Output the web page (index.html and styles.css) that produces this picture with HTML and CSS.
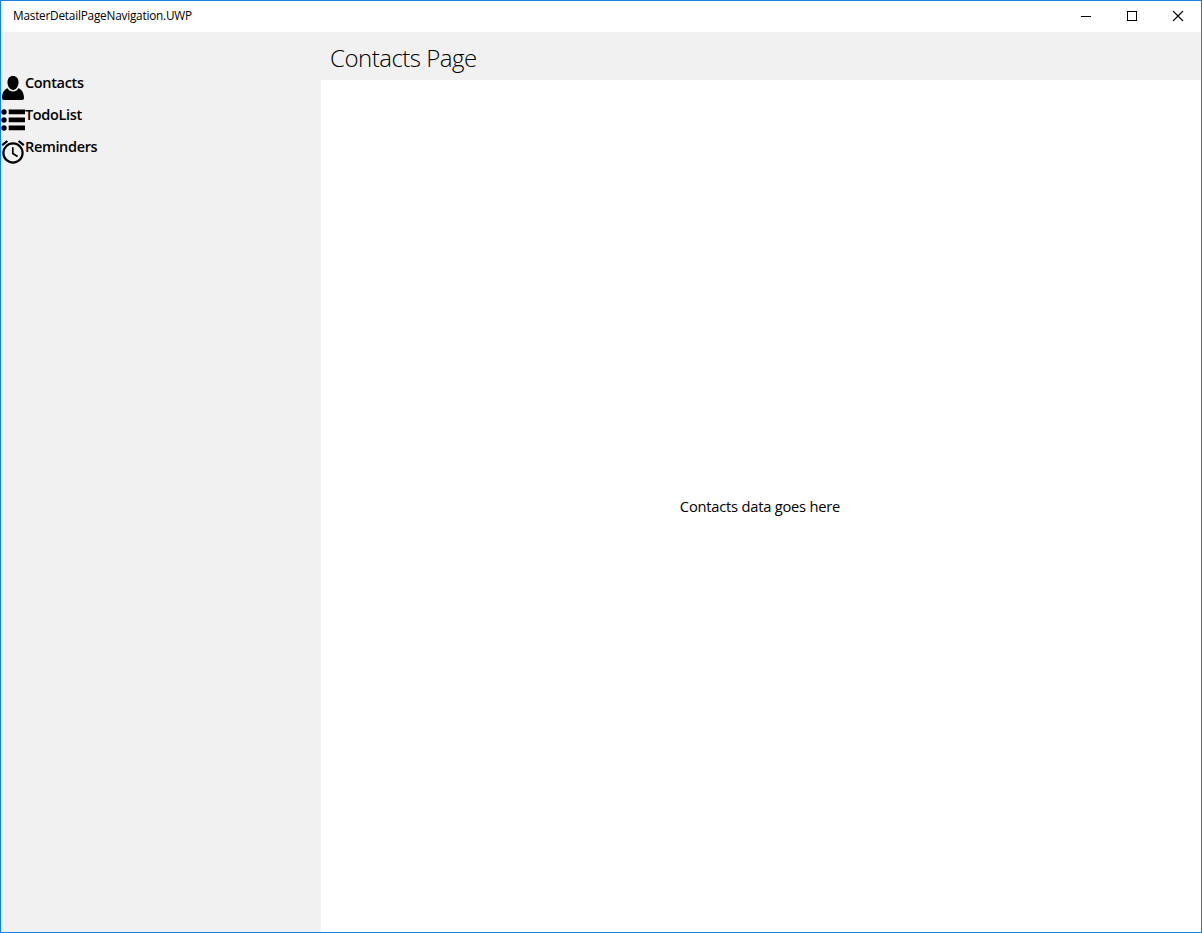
FILE: index.html
```html
<!DOCTYPE html>
<html lang="en">
<head>
<meta charset="utf-8">
<title>MasterDetailPageNavigation.UWP</title>
<link rel="stylesheet" href="styles.css">
</head>
<body>
<div class="window">
  <header class="titlebar">
    <span class="app-name">MasterDetailPageNavigation.UWP</span>
    <div class="controls">
      <svg class="control" viewBox="0 0 46 31"><path d="M18 15.500h10"/></svg>
      <svg class="control" viewBox="0 0 46 31"><path d="M18.500 10.500h9v9h-9z"/></svg>
      <svg class="control smooth" viewBox="0 0 46 31"><path d="M18 10l10 10M28 10l-10 10"/></svg>
    </div>
  </header>
  <div class="body">
    <nav class="master">
      <a class="item">
        <svg class="icon" viewBox="0 0 24 24"><path d="M12 0c3.400 0 5.500 2.400 5.500 6.200S15.200 14 12 14 6.500 10 6.500 6.200 8.600 0 12 0z"/><path d="M6.500 12.200C7.800 14.300 9.700 15.500 12 15.500s4.200-1.200 5.500-3.300c3.500 1.300 5.500 5 5.500 9.800 0 1.300-.7 2-2 2H3c-1.300 0-2-.7-2-2 0-4.800 2-8.500 5.500-9.800z"/></svg>
        <span class="label">Contacts</span>
      </a>
      <a class="item">
        <svg class="icon" viewBox="0 0 24 24"><circle cx="3" cy="4" r="2.700"/><circle cx="3" cy="12" r="2.700"/><circle cx="3" cy="20" r="2.700"/><path d="M7.700 1.600H24V6.300H7.700zM7.700 9.600H24v4.700H7.700zM7.700 17.600H24v4.700H7.700z"/></svg>
        <span class="label">TodoList</span>
      </a>
      <a class="item">
        <svg class="icon line" viewBox="0 0 24 24"><circle cx="12" cy="13" r="9.600"/><path d="M1.200 5.200l5.200-4.200M22.800 5.200l-5.200-4.200"/><path class="hands" d="M11.800 7.200v6.300l4.800 3"/></svg>
        <span class="label">Reminders</span>
      </a>
    </nav>
    <main class="detail">
      <h1 class="page-title">Contacts Page</h1>
      <div class="content"><span class="message">Contacts data goes here</span></div>
    </main>
  </div>
</div>
</body>
</html>
```
FILE: styles.css
```css
* { box-sizing: border-box; }
body {
  margin: 0;
  font-family: "Open Sans", "Noto Sans", sans-serif;
  color: #000;
}
.window {
  width: 100vw;
  height: 100vh;
  border: 1px solid #1a80d9;
  display: flex;
  flex-direction: column;
  background: #fff;
  overflow: hidden;
}
.titlebar {
  height: 31px;
  flex: none;
  display: flex;
  justify-content: space-between;
  padding-left: 12px;
}
.app-name {
  font-size: 11.8px;
  line-height: 28px;
  letter-spacing: -0.22px;
  white-space: nowrap;
}
.controls { display: flex; }
.control {
  width: 46px;
  height: 31px;
  fill: none;
  stroke: #000;
  stroke-width: 1;
  shape-rendering: crispEdges;
}
.smooth { shape-rendering: auto; stroke-width: 1.1; }
.body { flex: 1; display: flex; }
.master {
  width: 320px;
  background: #f1f1f1;
  padding-top: 40px;
}
.item { height: 32px; display: flex; }
.icon { width: 24px; height: 24px; margin-top: 4px; flex: none; }
.line { fill: none; stroke: #000; stroke-width: 2.200; }
.hands { stroke-width: 1.700; }
.label {
  font-size: 14.5px;
  font-weight: 600;
  line-height: 22px;
  letter-spacing: -0.35px;
  white-space: nowrap;
}
.detail { flex: 1; display: flex; flex-direction: column; }
.page-title {
  margin: 0;
  height: 48px;
  padding-left: 9px;
  background: #f1f1f1;
  font-size: 24px;
  font-weight: 300;
  line-height: 51px;
  letter-spacing: -0.5px;
  color: #000;
  white-space: nowrap;
}
.content {
  flex: 1;
  display: flex;
  align-items: center;
  justify-content: center;
}
.message {
  font-size: 14.7px;
  line-height: 20px;
  letter-spacing: -0.22px;
  padding-right: 2px;
}
```
